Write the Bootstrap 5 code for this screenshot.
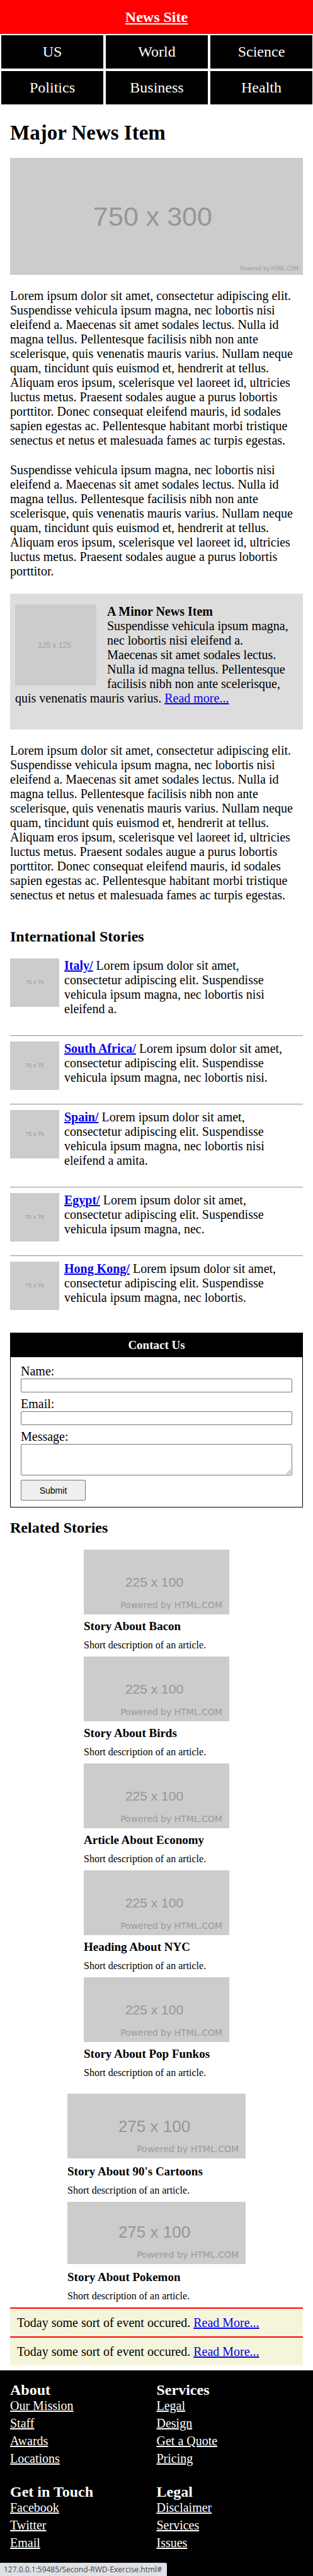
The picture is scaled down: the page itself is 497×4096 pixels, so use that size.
<!DOCTYPE html>
<html lang="en">
<head>
<meta charset="utf-8">
<meta name="viewport" content="width=device-width, initial-scale=1">
<title>News Site</title>
<link rel="stylesheet" href="https://cdn.jsdelivr.net/npm/bootstrap@5.3.0/dist/css/bootstrap.min.css">
<style>
  body { font: 20px/23px "Liberation Serif", serif; color: #000; background: #fff; }
  a { color: #00e; text-decoration: underline; }
  h1, h2, h3, h4 { font-weight: 700; margin: 0; }
  h1 { font-size: 33px; line-height: 38px; margin-bottom: 21px; }
  h2 { font-size: 24px; line-height: 28px; margin-bottom: 21px; }
  p { margin-bottom: 24px; }

  .site-header { background: #f00; height: 54px; font-size: 24px; }
  .site-header a { color: #fff; font-weight: 700; }
  .site-nav { display: grid; grid-template-columns: repeat(3, 1fr); gap: 4px; padding: 2px 1px 2px 2px; }
  .site-nav a { background: #000; color: #fff; height: 53px; font-size: 24px; text-decoration: none; }
  main { padding: 24px 16px 8px; }

  /* grey picture placeholders */
  .ph { position: relative; background: #ccc; color: #969696; font-family: "Liberation Sans", sans-serif; line-height: 1; display: flex; align-items: center; justify-content: center; }
  .ph small { position: absolute; right: 11px; bottom: 7px; font: 14px/16px "DejaVu Sans", sans-serif; color: #999; }
  .ph-hero { aspect-ratio: 750 / 300; font-size: 43px; padding-right: 12px; margin-bottom: 22px; }
  .ph-hero small { right: 7px; bottom: 4px; font-size: 8px; line-height: 10px; }
  .ph-minor { width: 129px; height: 129px; font-size: 12px; margin-right: 17px; padding-right: 4px; color: #a0a0a0; }
  .ph-thumb { width: 78px; height: 77px; font-size: 9px; flex: none; color: #999; }

  .minor { background: #ddd; padding: 17px 16px 38px 8px; margin-bottom: 22px; }
  .minor h3 { display: flow-root; font-size: 20px; line-height: 23px; }
  .intl-title { margin-top: 40px; }
  .intl p { margin-bottom: 30px; padding-right: 8px; }
  .intl hr { margin: 0 0 8px; border: 0; border-top: 1px solid #9a9a9a; border-bottom: 1px solid #eee; opacity: 1; }

  .contact { border: 1px solid #000; margin: 14px 0 18px; }
  .contact h3 { background: #000; color: #fff; font-size: 19px; line-height: 38px; text-align: center; }
  .contact-body { padding: 11px 16px 10px; }
  .contact label { display: block; }
  .contact .form-control { display: block; border: 1px solid #767676; border-radius: 2px; padding: 1px 2px; min-height: 0; height: 22px; font-size: 14px; line-height: 18px; margin-bottom: 7px; }
  .contact textarea.form-control { height: 50px; }
  .contact button { display: block; width: 103px; height: 33px; background: #efefef; color: #000; border: 1px solid #767676; border-radius: 2px; padding: 0; font: 14px/18px "Liberation Sans", sans-serif; }

  .story { width: 231px; margin: 0 auto; padding-bottom: 9px; }
  .story .ph { height: 103px; font-size: 21px; padding-right: 7px; }
  .story h3 { font-size: 19px; line-height: 22px; margin: 8px 0 10px; }
  .story p { font-size: 16px; line-height: 18px; margin: 0; }
  .story-wide { width: 283px; }
  .story-wide .ph { font-size: 26px; }
  .story-wide h3 { margin-top: 10px; }
  .story-wide .ph-short { height: 99px; padding-bottom: 4px; }
  .stories-wide { margin-top: 15px; }

  .event { background: beige; border-top: 2px solid #f00; padding: 11px 11px 10px; }

  .site-footer { background: #000; color: #fff; padding: 17px 16px 42px; }
  .site-footer a { color: #fff; }
  .site-footer h2 { margin: 0; }
  .site-footer .row { row-gap: 22px; }
  .site-footer li { margin-bottom: 5px; }
  .status { background: #dee1e6; color: #444; height: 21px; padding: 0 8px 0 6px; border-top-right-radius: 3px; font: 12px/21px "Open Sans", sans-serif; }
</style>
</head>
<body>
<header class="site-header d-flex align-items-center justify-content-center"><a href="#">News Site</a></header>
<nav class="site-nav" aria-label="Sections">
  <a class="d-flex align-items-center justify-content-center" href="#">US</a>
  <a class="d-flex align-items-center justify-content-center" href="#">World</a>
  <a class="d-flex align-items-center justify-content-center" href="#">Science</a>
  <a class="d-flex align-items-center justify-content-center" href="#">Politics</a>
  <a class="d-flex align-items-center justify-content-center" href="#">Business</a>
  <a class="d-flex align-items-center justify-content-center" href="#">Health</a>
</nav>

<main>
  <article>
    <h1>Major News Item</h1>
    <div class="ph ph-hero">750 x 300<small>Powered by HTML.COM</small></div>
    <p>Lorem ipsum dolor sit amet, consectetur adipiscing elit. Suspendisse vehicula ipsum magna, nec lobortis nisi eleifend a. Maecenas sit amet sodales lectus. Nulla id magna tellus. Pellentesque facilisis nibh non ante scelerisque, quis venenatis mauris varius. Nullam neque quam, tincidunt quis euismod et, hendrerit at tellus. Aliquam eros ipsum, scelerisque vel laoreet id, ultricies luctus metus. Praesent sodales augue a purus lobortis porttitor. Donec consequat eleifend mauris, id sodales sapien egestas ac. Pellentesque habitant morbi tristique senectus et netus et malesuada fames ac turpis egestas.</p>
    <p>Suspendisse vehicula ipsum magna, nec lobortis nisi eleifend a. Maecenas sit amet sodales lectus. Nulla id magna tellus. Pellentesque facilisis nibh non ante scelerisque, quis venenatis mauris varius. Nullam neque quam, tincidunt quis euismod et, hendrerit at tellus. Aliquam eros ipsum, scelerisque vel laoreet id, ultricies luctus metus. Praesent sodales augue a purus lobortis porttitor.</p>
    <aside class="minor">
      <div class="ph ph-minor float-start">125 x 125</div>
      <h3>A Minor News Item</h3>
      <p class="mb-0">Suspendisse vehicula ipsum magna, nec lobortis nisi eleifend a. Maecenas sit amet sodales lectus. Nulla id magna tellus. Pellentesque facilisis nibh non ante scelerisque, quis venenatis mauris varius. <a href="#">Read more...</a></p>
    </aside>
    <p class="mb-0">Lorem ipsum dolor sit amet, consectetur adipiscing elit. Suspendisse vehicula ipsum magna, nec lobortis nisi eleifend a. Maecenas sit amet sodales lectus. Nulla id magna tellus. Pellentesque facilisis nibh non ante scelerisque, quis venenatis mauris varius. Nullam neque quam, tincidunt quis euismod et, hendrerit at tellus. Aliquam eros ipsum, scelerisque vel laoreet id, ultricies luctus metus. Praesent sodales augue a purus lobortis porttitor. Donec consequat eleifend mauris, id sodales sapien egestas ac. Pellentesque habitant morbi tristique senectus et netus et malesuada fames ac turpis egestas.</p>
  </article>

  <section class="intl">
    <h2 class="intl-title">International Stories</h2>
    <div class="d-flex align-items-start gap-2"><div class="ph ph-thumb">75 x 75</div><p><a class="fw-bold" href="#">Italy/</a> Lorem ipsum dolor sit amet, consectetur adipiscing elit. Suspendisse vehicula ipsum magna, nec lobortis nisi eleifend a.</p></div>
    <hr>
    <div class="d-flex align-items-start gap-2"><div class="ph ph-thumb">75 x 75</div><p><a class="fw-bold" href="#">South Africa/</a> Lorem ipsum dolor sit amet, consectetur adipiscing elit. Suspendisse vehicula ipsum magna, nec lobortis nisi.</p></div>
    <hr>
    <div class="d-flex align-items-start gap-2"><div class="ph ph-thumb">75 x 75</div><p><a class="fw-bold" href="#">Spain/</a> Lorem ipsum dolor sit amet, consectetur adipiscing elit. Suspendisse vehicula ipsum magna, nec lobortis nisi eleifend a amita.</p></div>
    <hr>
    <div class="d-flex align-items-start gap-2"><div class="ph ph-thumb">75 x 75</div><p><a class="fw-bold" href="#">Egypt/</a> Lorem ipsum dolor sit amet, consectetur adipiscing elit. Suspendisse vehicula ipsum magna, nec.</p></div>
    <hr>
    <div class="d-flex align-items-start gap-2"><div class="ph ph-thumb">75 x 75</div><p><a class="fw-bold" href="#">Hong Kong/</a> Lorem ipsum dolor sit amet, consectetur adipiscing elit. Suspendisse vehicula ipsum magna, nec lobortis.</p></div>
  </section>

  <form class="contact">
    <h3>Contact Us</h3>
    <div class="contact-body">
      <label for="name">Name:</label>
      <input class="form-control" type="text" id="name">
      <label for="email">Email:</label>
      <input class="form-control" type="email" id="email">
      <label for="message">Message:</label>
      <textarea class="form-control" id="message"></textarea>
      <button type="submit">Submit</button>
    </div>
  </form>

  <section>
    <h2>Related Stories</h2>
    <article class="story"><div class="ph">225 x 100<small>Powered by HTML.COM</small></div><h3>Story About Bacon</h3><p>Short description of an article.</p></article>
    <article class="story"><div class="ph">225 x 100<small>Powered by HTML.COM</small></div><h3>Story About Birds</h3><p>Short description of an article.</p></article>
    <article class="story"><div class="ph">225 x 100<small>Powered by HTML.COM</small></div><h3>Article About Economy</h3><p>Short description of an article.</p></article>
    <article class="story"><div class="ph">225 x 100<small>Powered by HTML.COM</small></div><h3>Heading About NYC</h3><p>Short description of an article.</p></article>
    <article class="story"><div class="ph">225 x 100<small>Powered by HTML.COM</small></div><h3>Story About Pop Funkos</h3><p>Short description of an article.</p></article>
    <div class="stories-wide">
      <article class="story story-wide"><div class="ph">275 x 100<small>Powered by HTML.COM</small></div><h3>Story About 90's Cartoons</h3><p>Short description of an article.</p></article>
      <article class="story story-wide"><div class="ph ph-short">275 x 100<small>Powered by HTML.COM</small></div><h3>Story About Pokemon</h3><p>Short description of an article.</p></article>
    </div>
  </section>

  <section>
    <div class="event">Today some sort of event occured. <a href="#">Read More...</a></div>
    <div class="event">Today some sort of event occured. <a href="#">Read More...</a></div>
  </section>
</main>

<footer class="site-footer">
  <div class="row gx-0">
    <div class="col-6"><h2>About</h2>
      <ul class="list-unstyled mb-0"><li><a href="#">Our Mission</a></li><li><a href="#">Staff</a></li><li><a href="#">Awards</a></li><li><a href="#">Locations</a></li></ul></div>
    <div class="col-6"><h2>Services</h2>
      <ul class="list-unstyled mb-0"><li><a href="#">Legal</a></li><li><a href="#">Design</a></li><li><a href="#">Get a Quote</a></li><li><a href="#">Pricing</a></li></ul></div>
    <div class="col-6"><h2>Get in Touch</h2>
      <ul class="list-unstyled mb-0"><li><a href="#">Facebook</a></li><li><a href="#">Twitter</a></li><li><a href="#">Email</a></li></ul></div>
    <div class="col-6"><h2>Legal</h2>
      <ul class="list-unstyled mb-0"><li><a href="#">Disclaimer</a></li><li><a href="#">Services</a></li><li><a href="#">Issues</a></li></ul></div>
  </div>
</footer>
<div class="status position-fixed bottom-0 start-0">127.0.0.1:59485/Second-RWD-Exercise.html#</div>
<script src="https://cdn.jsdelivr.net/npm/bootstrap@5.3.0/dist/js/bootstrap.bundle.min.js"></script>
</body>
</html>
